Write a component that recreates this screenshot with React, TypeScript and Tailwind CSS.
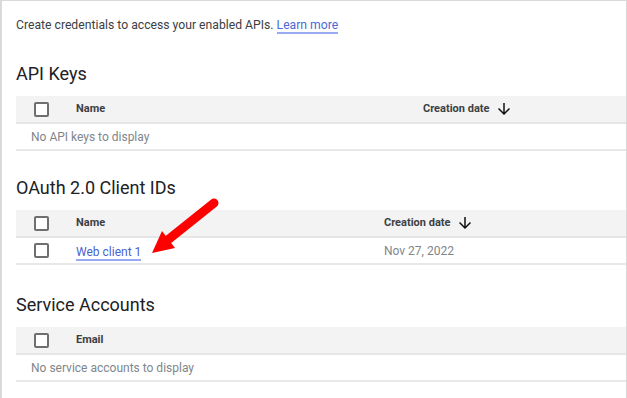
import React from "react";

function Checkbox() {
  return <div className="w-[15px] h-[15px] border-2 border-[#6f6f6f] rounded-[2px] bg-white" />;
}

function SortArrow() {
  return (
    <svg viewBox="0 0 24 24" className="w-[18px] h-[18px] ml-[6px]" fill="#111111">
      <path d="M20 12l-1.41-1.41L13 16.17V4h-2v12.17l-5.58-5.59L4 12l8 8 8-8z" />
    </svg>
  );
}

type Col = { label: string; width?: string; sort?: boolean };

function Table({
  cols,
  children,
}: {
  cols: Col[];
  children: React.ReactNode;
}) {
  return (
    <div className="w-full">
      <div className="flex items-center h-[28px] bg-[#f3f3f3] border-b-2 border-[#e6e6e6] pl-[18px]">
        <Checkbox />
        <div className="ml-[27px] flex items-center">
          {cols.map((c) => (
            <div key={c.label} className={`flex items-center ${c.width ?? ""}`}>
              <span className="text-[11px] font-bold text-[#3c4043]">{c.label}</span>
              {c.sort && <SortArrow />}
            </div>
          ))}
        </div>
      </div>
      {children}
    </div>
  );
}

function EmptyRow({ text }: { text: string }) {
  return (
    <div className="flex items-center h-[27px] border-b-2 border-[#e8e8e8] pl-[15px] text-[12px] text-[#80868b]">
      {text}
    </div>
  );
}

export default function App() {
  return (
    <div
      className="relative w-full h-[398px] bg-white border-t border-l-2 border-r border-[#d9d9d9] overflow-hidden"
      style={{ fontFamily: "Roboto, 'Liberation Sans', sans-serif" }}
    >
      <div className="pl-[14px] pt-[16px]">
        <p className="text-[12.2px] leading-[16px] text-[#3c4043]">
          Create credentials to access your enabled APIs.{" "}
          <span className="text-[#4a6ad6] border-b-2 border-[#9aaaf0]">Learn more</span>
        </p>

        {/* API Keys */}
        <h2 className="mt-[29px] mb-[10px] text-[18px] leading-[24px] text-[#202124]">API Keys</h2>
        <Table cols={[{ label: "Name", width: "w-[347px]" }, { label: "Creation date", sort: true }]}>
          <EmptyRow text="No API keys to display" />
        </Table>

        {/* OAuth */}
        <h2 className="mt-[25px] mb-[10px] text-[18px] leading-[24px] text-[#202124]">OAuth 2.0 Client IDs</h2>
        <Table cols={[{ label: "Name", width: "w-[308px]" }, { label: "Creation date", sort: true }]}>
          <div className="flex items-center h-[27px] border-b-2 border-[#e8e8e8] pl-[18px]">
            <Checkbox />
            <div className="ml-[27px] w-[308px]">
              <span className="text-[12px] leading-[14px] text-[#4a62d0] border-b-2 border-[#9aaaf0]">Web client 1</span>
            </div>
            <span className="text-[12px] text-[#80868b]">Nov 27, 2022</span>
          </div>
        </Table>

        {/* Service Accounts */}
        <h2 className="mt-[28px] mb-[10px] text-[18px] leading-[24px] text-[#202124]">Service Accounts</h2>
        <Table cols={[{ label: "Email" }]}>
          <EmptyRow text="No service accounts to display" />
        </Table>
      </div>

      {/* red annotation arrow */}
      <svg className="absolute left-0 top-0 pointer-events-none" width="627" height="398">
        <line x1="212" y1="202" x2="167" y2="238" stroke="#ff0000" strokeWidth="9" strokeLinecap="round" />
        <polygon points="150,252 160,230 173,247" fill="#ff0000" />
      </svg>
    </div>
  );
}
